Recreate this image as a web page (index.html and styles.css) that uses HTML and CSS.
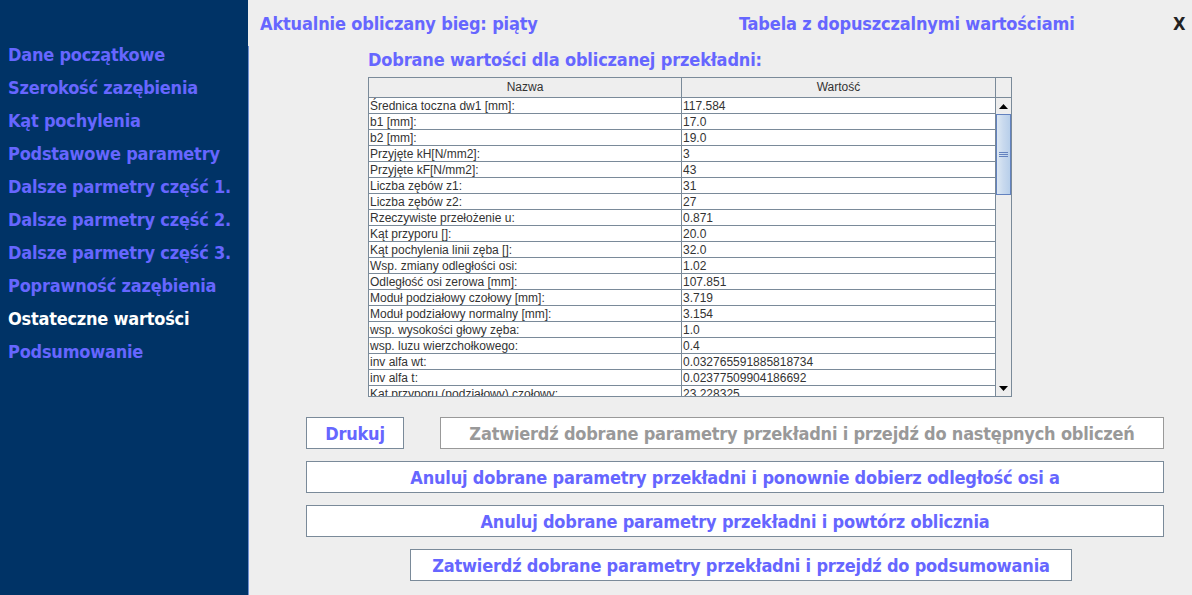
FILE: index.html
```html
<!DOCTYPE html>
<html lang="pl">
<head>
<meta charset="utf-8">
<title>Ostateczne wartości</title>
<link rel="stylesheet" href="styles.css">
</head>
<body>
<div class="app">
  <nav class="sidebar">
    <ul class="menu">
      <li>Dane początkowe</li>
      <li>Szerokość zazębienia</li>
      <li>Kąt pochylenia</li>
      <li>Podstawowe parametry</li>
      <li>Dalsze parmetry część 1.</li>
      <li>Dalsze parmetry część 2.</li>
      <li>Dalsze parmetry część 3.</li>
      <li>Poprawność zazębienia</li>
      <li class="active">Ostateczne wartości</li>
      <li>Podsumowanie</li>
    </ul>
  </nav>
  <main class="main">
    <header class="topbar">
      <span class="title-left">Aktualnie obliczany bieg: piąty</span>
      <span class="title-right">Tabela z dopuszczalnymi wartościami</span>
      <span class="close">X</span>
    </header>
    <section class="content">
      <h2 class="subtitle">Dobrane wartości dla obliczanej przekładni:</h2>
      <div class="table">
        <div class="thead">
          <div class="th">Nazwa</div>
          <div class="th">Wartość</div>
          <div class="th corner"></div>
        </div>
        <div class="tbody-wrap">
          <div class="tbody">
            <div class="tr"><div class="td">Średnica toczna dw1 [mm]:</div><div class="td">117.584</div></div>
            <div class="tr"><div class="td">b1 [mm]:</div><div class="td">17.0</div></div>
            <div class="tr"><div class="td">b2 [mm]:</div><div class="td">19.0</div></div>
            <div class="tr"><div class="td">Przyjęte kH[N/mm2]:</div><div class="td">3</div></div>
            <div class="tr"><div class="td">Przyjęte kF[N/mm2]:</div><div class="td">43</div></div>
            <div class="tr"><div class="td">Liczba zębów z1:</div><div class="td">31</div></div>
            <div class="tr"><div class="td">Liczba zębów z2:</div><div class="td">27</div></div>
            <div class="tr"><div class="td">Rzeczywiste przełożenie u:</div><div class="td">0.871</div></div>
            <div class="tr"><div class="td">Kąt przyporu []:</div><div class="td">20.0</div></div>
            <div class="tr"><div class="td">Kąt pochylenia linii zęba []:</div><div class="td">32.0</div></div>
            <div class="tr"><div class="td">Wsp. zmiany odległości osi:</div><div class="td">1.02</div></div>
            <div class="tr"><div class="td">Odległość osi zerowa [mm]:</div><div class="td">107.851</div></div>
            <div class="tr"><div class="td">Moduł podziałowy czołowy [mm]:</div><div class="td">3.719</div></div>
            <div class="tr"><div class="td">Moduł podziałowy normalny [mm]:</div><div class="td">3.154</div></div>
            <div class="tr"><div class="td">wsp. wysokości głowy zęba:</div><div class="td">1.0</div></div>
            <div class="tr"><div class="td">wsp. luzu wierzchołkowego:</div><div class="td">0.4</div></div>
            <div class="tr"><div class="td">inv alfa wt:</div><div class="td">0.032765591885818734</div></div>
            <div class="tr"><div class="td">inv alfa t:</div><div class="td">0.02377509904186692</div></div>
            <div class="tr"><div class="td">Kąt przyporu (podziałowy) czołowy:</div><div class="td">23.228325</div></div>
          </div>
          <div class="vscroll">
            <div class="arrow up"><svg width="9" height="5" viewBox="0 0 9 5"><path d="M0 5 L4.5 0 L9 5 Z" fill="#000"/></svg></div>
            <div class="track">
              <div class="thumb"><svg width="9" height="5" viewBox="0 0 9 5"><path d="M0 0.5H9M0 2.5H9M0 4.5H9" stroke="#6382bf" stroke-width="1"/></svg></div>
            </div>
            <div class="arrow down"><svg width="9" height="5" viewBox="0 0 9 5"><path d="M0 0 L4.5 5 L9 0 Z" fill="#000"/></svg></div>
          </div>
        </div>
      </div>
      <div class="buttons">
        <div class="btn-row">
          <button class="btn btn-print">Drukuj</button>
          <button class="btn btn-next" disabled>Zatwierdź dobrane parametry przekładni i przejdź do następnych obliczeń</button>
        </div>
        <button class="btn btn-wide">Anuluj dobrane parametry przekładni i ponownie dobierz odległość osi a</button>
        <button class="btn btn-wide">Anuluj dobrane parametry przekładni i powtórz oblicznia</button>
        <button class="btn btn-summary">Zatwierdź dobrane parametry przekładni i przejdź do podsumowania</button>
      </div>
    </section>
  </main>
</div>
</body>
</html>
```

FILE: styles.css
```css
* { box-sizing: border-box; }
html, body { margin: 0; padding: 0; }
body {
  width: 1192px;
  height: 595px;
  overflow: hidden;
  background: #eeeeee;
  font-family: "DejaVu Sans Condensed", "DejaVu Sans", sans-serif;
  font-weight: bold;
}
.app {
  display: flex;
  width: 1192px;
  height: 595px;
}
.sidebar {
  width: 248px;
  flex: none;
  background: #003366;
  padding-top: 43px;
}
.menu {
  list-style: none;
  margin: 0;
  padding: 0 0 0 8px;
}
.menu li {
  height: 33px;
  line-height: 24px;
  font-size: 18px;
  letter-spacing: -0.22px;
  color: #6666ff;
  white-space: nowrap;
}
.menu li.active { color: #ffffff; }

.main {
  flex: 1;
  display: flex;
  flex-direction: column;
}
.topbar {
  height: 46px;
  display: flex;
  align-items: center;
  padding-left: 12px;
  font-size: 18px;
  letter-spacing: -0.15px;
  color: #6666ff;
}
.title-left { width: 479px; }
.title-right { width: 434px; }
.close { color: #222222; font-size: 18px; }

.content {
  flex: 1;
  border-left: 1px solid #6f8fd0;
  padding-left: 119px;
}
.subtitle {
  margin: 2px 0 0 0;
  height: 29px;
  line-height: 24px;
  font-size: 18px;
  letter-spacing: -0.15px;
  font-weight: bold;
  color: #6666ff;
}
.table {
  width: 644px;
  height: 320px;
  border: 1px solid #7a8a99;
  display: flex;
  flex-direction: column;
  font-family: "Liberation Sans", Arial, sans-serif;
  font-weight: normal;
  font-size: 12px;
  color: #333333;
  background: #ffffff;
}
.thead {
  display: grid;
  grid-template-columns: 313px 314px 15px;
  height: 20px;
  background: #eeeeee;
  border-bottom: 1px solid #7a8a99;
}
.th {
  text-align: center;
  line-height: 19px;
  border-right: 1px solid #7a8a99;
}
.th.corner { border-right: none; }
.tbody-wrap {
  flex: 1;
  display: flex;
  overflow: hidden;
}
.tbody {
  width: 627px;
  overflow: hidden;
}
.tr {
  display: grid;
  grid-template-columns: 313px 314px;
  height: 16px;
}
.td {
  line-height: 16px;
  padding-left: 1px;
  border-right: 1px solid #7a8a99;
  border-bottom: 1px solid #7a8a99;
  white-space: nowrap;
  overflow: hidden;
}
.vscroll {
  width: 15px;
  display: flex;
  flex-direction: column;
  background: #eeeeee;
}
.arrow {
  height: 16px;
  display: flex;
  align-items: center;
  justify-content: center;
  background: #eeeeee;
}
.track {
  flex: 1;
  background: #eeeeee;
}
.thumb {
  height: 81px;
  border: 1px solid #6382bf;
  background: linear-gradient(to right, #dde8f3 0%, #c8d9ee 50%, #b8cfea 100%);
  display: flex;
  align-items: center;
  justify-content: center;
}

.buttons {
  margin-left: -62px;
  margin-top: 20px;
  display: flex;
  flex-direction: column;
  gap: 12px;
}
.btn-row {
  display: flex;
  gap: 36px;
}
.btn {
  height: 32px;
  background: #ffffff;
  border: 1px solid #7a8a99;
  font-family: "DejaVu Sans Condensed", "DejaVu Sans", sans-serif;
  font-weight: bold;
  font-size: 18px;
  letter-spacing: -0.2px;
  color: #6666ff;
  padding: 0;
  white-space: nowrap;
  cursor: pointer;
}
.btn-print { width: 98px; }
.btn-next { width: 724px; color: #999999; border-color: #999999; }
.btn-wide { width: 858px; }
.btn-summary { width: 662px; margin-left: 104px; }
```
